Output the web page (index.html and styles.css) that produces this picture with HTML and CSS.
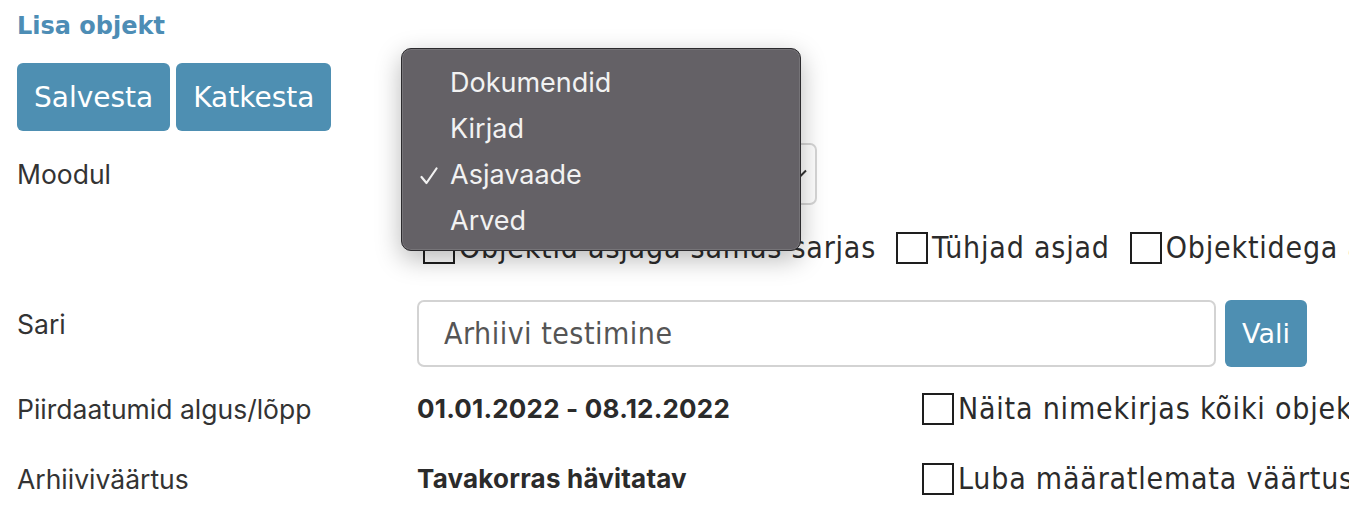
FILE: index.html
```html
<!DOCTYPE html>
<html lang="et">
<head>
  <meta charset="UTF-8">
  <meta name="viewport" content="width=device-width, initial-scale=1.0">
  <title>Lisa objekt</title>
  <link rel="stylesheet" href="styles.css">
</head>
<body>
  <div class="page">
    <h1 class="title">Lisa objekt</h1>

    <div class="actions">
      <button class="btn">Salvesta</button>
      <button class="btn">Katkesta</button>
    </div>

    <div class="row row-module">
      <div class="label">Moodul</div>
      <div class="select">
        <span>Asjavaade</span>
        <svg class="chevron" width="16" height="10" viewBox="0 0 16 10">
          <path d="M1 1.5 L8 8.5 L15 1.5" fill="none" stroke="#333" stroke-width="2"/>
        </svg>
      </div>
    </div>

    <div class="row row-filters">
      <div class="label"></div>
      <div class="checks">
        <label class="check"><span class="box"></span>Objektid asjaga samas sarjas</label>
        <label class="check"><span class="box"></span>Tühjad asjad</label>
        <label class="check"><span class="box"></span>Objektidega asjad</label>
      </div>
    </div>

    <div class="row row-series">
      <div class="label">Sari</div>
      <div class="input">Arhiivi testimine</div>
      <button class="btn btn-small">Vali</button>
    </div>

    <div class="row row-info">
      <div class="label">Piirdaatumid algus/lõpp</div>
      <div class="value">01.01.2022 - 08.12.2022</div>
      <label class="check"><span class="box"></span>Näita nimekirjas kõiki objekte</label>
    </div>

    <div class="row row-info">
      <div class="label">Arhiiviväärtus</div>
      <div class="value">Tavakorras hävitatav</div>
      <label class="check"><span class="box"></span>Luba määratlemata väärtusega</label>
    </div>

    <!-- native select popup, open over the form -->
    <ul class="menu">
      <li>Dokumendid</li>
      <li>Kirjad</li>
      <li class="selected">
        <svg class="tick" width="18" height="18" viewBox="0 0 18 18">
          <path d="M1.5 10 L6.5 16 L16.5 1.5" fill="none" stroke="#f2f2f2" stroke-width="2.2" stroke-linecap="round" stroke-linejoin="round"/>
        </svg>
        Asjavaade
      </li>
      <li>Arved</li>
    </ul>
  </div>
</body>
</html>
```

FILE: styles.css
```css
body { margin: 0; background: #fff; overflow: hidden; }
.page { position: relative; padding: 12px 0 0 17px; white-space: nowrap; color: #333; }

.title { margin: 0; height: 40px; font: bold 24px/28px "DejaVu Sans", sans-serif; color: #4d8db5; }

.actions { display: flex; gap: 6px; margin-top: 11px; }
.btn { height: 68px; padding: 0 17px; border: none; border-radius: 6px; background: #4e8fb2; color: #fff; font: 28px "DejaVu Sans", sans-serif; }
.btn-small { height: 67px; width: 82px; padding: 0; margin-left: 9px; font-size: 27px; }

.row { display: flex; }
.label { width: 400px; flex: none; font: 26.5px/30px Inter, sans-serif; color: #333; }

.row-module { margin-top: 12px; height: 62px; }
.row-module .label { padding-top: 16px; }
.select { position: relative; box-sizing: border-box; width: 400px; height: 62px; border: 2px solid #d6d6d6; border-radius: 7px; display: flex; align-items: center; padding-left: 24px; font: 30px "DejaVu Sans Condensed", "DejaVu Sans", sans-serif; color: #333; }
.chevron { position: absolute; right: 8px; top: 24px; }

.row-filters { margin-top: 25px; height: 36px; }
.checks { display: flex; gap: 20px; margin-left: 6px; }
.check { display: inline-flex; align-items: center; height: 36px; font: 30px/36px "DejaVu Sans Condensed", "DejaVu Sans", sans-serif; letter-spacing: 0.8px; color: #2b2b2b; }
.box { width: 32px; height: 32px; box-sizing: border-box; border: 2px solid #1e1e1e; margin-right: 4px; flex: none; }

.row-series { margin-top: 34px; height: 67px; }
.row-series .label { padding-top: 9px; }
.input { box-sizing: border-box; width: 799px; height: 67px; border: 2px solid #d3d3d3; border-radius: 7px; padding-left: 25px; display: flex; align-items: center; font: 30px "DejaVu Sans Condensed", "DejaVu Sans", sans-serif; letter-spacing: 0.5px; color: #555; }

.row-info { height: 70px; align-items: center; }
.row-series + .row-info { margin-top: 7px; }
.value { width: 505px; flex: none; font: bold 26px/30px Inter, sans-serif; letter-spacing: 0.2px; color: #2b2b2b; }

.menu { position: absolute; left: 401px; top: 48px; box-sizing: border-box; width: 400px; height: 203px; margin: 0; padding: 11px 0 0; list-style: none; background: #646166; border: 1px solid #2c2b2e; border-radius: 10px; box-shadow: inset 0 0 0 1px rgba(255,255,255,0.12), 0 8px 26px rgba(0,0,0,0.28); }
.menu li { position: relative; height: 46px; padding-left: 48px; font: 27px/46px Inter, sans-serif; color: #f2f2f2; }
.tick { position: absolute; left: 18px; top: 15px; }
```
